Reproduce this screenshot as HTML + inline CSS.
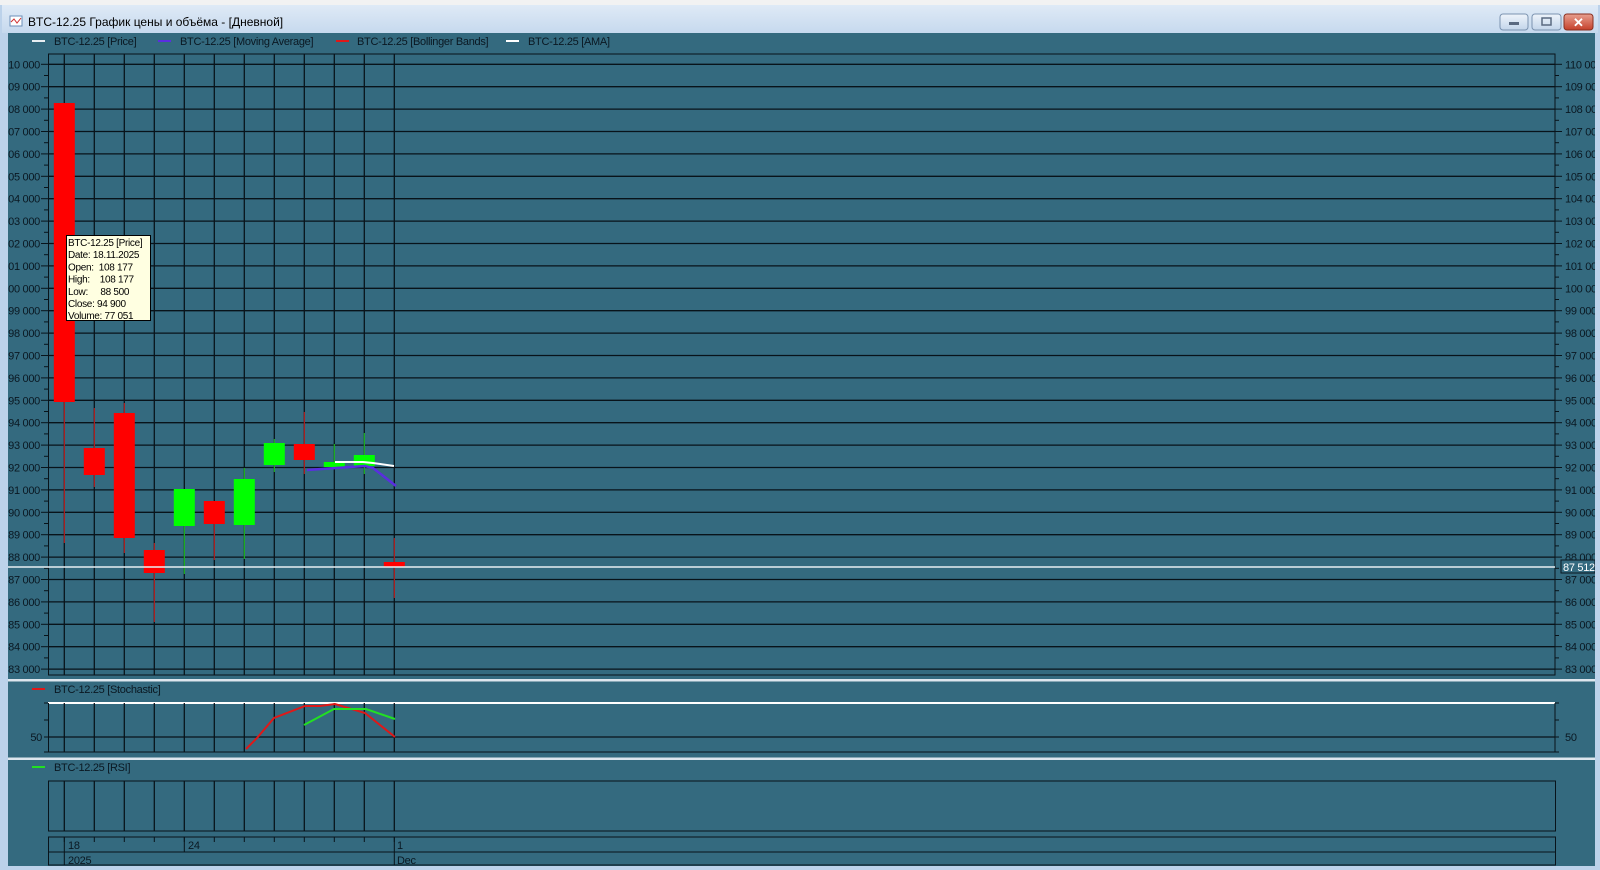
<!DOCTYPE html>
<html><head><meta charset="utf-8"><style>
html,body{margin:0;padding:0;width:1600px;height:870px;overflow:hidden;background:#bfd4ea;}
svg{display:block;font-family:"Liberation Sans",sans-serif;}
</style></head><body>
<svg id="s" width="1600" height="870" xmlns="http://www.w3.org/2000/svg">
<defs>
<linearGradient id="tb" x1="0" y1="0" x2="0" y2="1"><stop offset="0" stop-color="#dfeaf6"/><stop offset="1" stop-color="#c6d9ee"/></linearGradient>
<linearGradient id="cl" x1="0" y1="0" x2="0" y2="1"><stop offset="0" stop-color="#e8a090"/><stop offset="1" stop-color="#c5402a"/></linearGradient>
<linearGradient id="bt" x1="0" y1="0" x2="0" y2="1"><stop offset="0" stop-color="#eef4fb"/><stop offset="1" stop-color="#c3d5ea"/></linearGradient>
<clipPath id="cc"><rect x="8" y="33" width="1587" height="833"/></clipPath>
</defs>
<rect x="0" y="0" width="1600" height="5" fill="#f2f2f2"/>
<rect x="0" y="5" width="1600" height="865" fill="#bcd2ea"/>
<rect x="2" y="5" width="1596" height="28" fill="url(#tb)"/>
<rect x="10" y="16" width="12" height="10" fill="#fff" stroke="#6b8fb8"/>
<polyline points="11,22 14,19 17,23 21,18" fill="none" stroke="#d03030" stroke-width="1"/>
<text x="28" y="26" font-size="12" fill="#000">BTC-12.25 График цены и объёма - [Дневной]</text>
<rect x="1500" y="14" width="28" height="16" rx="3" fill="url(#bt)" stroke="#7b93b0"/>
<rect x="1509" y="22" width="10" height="3" fill="#5a6a80"/>
<rect x="1532" y="14" width="29" height="16" rx="3" fill="url(#bt)" stroke="#7b93b0"/>
<rect x="1542" y="18" width="9" height="7" fill="none" stroke="#5a6a80" stroke-width="1.5"/>
<rect x="1564" y="14" width="29" height="16" rx="3" fill="url(#cl)" stroke="#8a3020"/>
<text x="1578.5" y="27" font-size="13" font-weight="bold" fill="#fff" text-anchor="middle">✕</text>
<g clip-path="url(#cc)">
<rect x="8" y="33" width="1587" height="833" fill="#346a7f"/>
<g id="g"></g>
</g>
</svg>
<script>
var g=document.getElementById('g'),h='';
function L(x1,y1,x2,y2,c,w){h+='<line x1="'+x1+'" y1="'+y1+'" x2="'+x2+'" y2="'+y2+'" stroke="'+c+'" stroke-width="'+(w||1)+'"/>';}
function R(x,y,w,hh,c,s){h+='<rect x="'+x+'" y="'+y+'" width="'+w+'" height="'+hh+'" fill="'+c+'"'+(s?' stroke="'+s+'"':'')+'/>';}
function T(x,y,t,o){h+='<text x="'+x+'" y="'+y+'" font-size="'+((o&&o.fs)||11)+'" fill="'+((o&&o.c)||'#0a1822')+'"'+(o&&o.a?' text-anchor="'+o.a+'"':'')+' letter-spacing="-0.3">'+t+'</text>';}
var K='#08131a';
var lg=[[32,'#e8eef2','BTC-12.25 [Price]',54],[158,'#5a2ee0','BTC-12.25 [Moving Average]',180],[336,'#e01818','BTC-12.25 [Bollinger Bands]',357],[506,'#ffffff','BTC-12.25 [AMA]',528]];
lg.forEach(function(a){L(a[0],41,a[0]+13,41,a[1],2);T(a[3],45,a[2]);});
var xs=[];for(var i=0;i<12;i++)xs.push(64.3+i*30);
function py(p){return 64.3+(110000-p)*0.0224;}
for(var p=110000;p>=83000;p-=1000){var y=py(p);L(48,y,1555,y,K,1.3);
 var s=String(p%100000).padStart(5,'0');T(40,y+4,s.slice(0,2)+' '+s.slice(2),{a:'end'});L(41,y,48,y,K);L(1555,y,1562,y,K);
 var s2=String(p);T(1565,y+4,s2.slice(0,s2.length-3)+' '+s2.slice(-3));
 if(p>83000){var y2=py(p-500);L(44,y2,48,y2,K);L(1555,y2,1559,y2,K);}}
xs.forEach(function(x){L(x,54,x,675,K,1.3);});
R(48.5,54,1506.5,621,'none',K);
var RD='#ff0000',GR='#00ff00';
var c=[[0,103,402,103,543,RD],[1,448,475,408,487,RD],[2,413,538,403,553,RD],[3,550,573,543,622,RD],[4,489,526,489,574,GR],[5,501,524,501,560,RD],[6,479,525,468,559,GR],[7,443,465,439,472,GR],[8,444,460,412,474,RD],[9,462,467,444,468,GR],[10,455,466,433,474,GR],[11,562,567,538,598,RD]];
c.forEach(function(a){var x=xs[a[0]];var wc=a[5]==RD?'#d02020':'#20d020';L(x,a[3],x,a[4],wc,1);R(x-10.5,a[1],21,a[2]-a[1],a[5]);});
h+='<polyline points="307,470 365,466 373,468 396,486" fill="none" stroke="#5a2ee0" stroke-width="2.5"/>';
h+='<polyline points="335,462 363,462 373,463 394,466" fill="none" stroke="#ffffff" stroke-width="2"/>';
L(8,567,1555,567,'#e8f0f4',1.5);
R(1561,560,34,13,'#346a7f','#0a1822');T(1563,571,'87 512',{c:'#ffffff'});
R(66.5,235.5,84,85,'#ffffe1','#000');
['BTC-12.25 [Price]','Date: 18.11.2025','Open:  108 177','High:    108 177','Low:     88 500','Close: 94 900','Volume: 77 051'].forEach(function(t,i){h+='<text x="68" y="'+(246+i*12.2)+'" font-size="10" letter-spacing="-0.3" fill="#000" xml:space="preserve">'+t+'</text>';});
R(8,679,1587,2.5,'#dde6ee');R(8,757.5,1587,2.5,'#dde6ee');
L(32,689,45,689,'#e01818',2);T(54,693,'BTC-12.25 [Stochastic]');
L(48,703,1555,703,'#ffffff',2);L(48,737,1555,737,K,1.3);
xs.forEach(function(x){L(x,703,x,752,K,1.3);});
L(48.5,703,48.5,752,K);L(1555,703,1555,752,K);L(48,752,1555,752,K);
[703,720,737,752].forEach(function(y){L(44,y,48,y,K);L(1555,y,1559,y,K);});
T(42,741,'50',{a:'end'});T(1565,741,'50');
h+='<polyline points="246,749 257,738 274,718 305,706 320,706 335,704 365,713 395,737" fill="none" stroke="#e01818" stroke-width="2"/>';
h+='<polyline points="304,725 334,709 366,709 395,719" fill="none" stroke="#22e022" stroke-width="2"/>';
L(32,767,45,767,'#22e022',2);T(54,771,'BTC-12.25 [RSI]');
R(48.5,781,1507,50,'none',K);
xs.forEach(function(x){L(x,781,x,831,K,1.3);});
R(48.5,837,1507,28,'none',K);L(48,852,1555,852,K);
L(64.3,837,64.3,865,K);L(394.3,837,394.3,865,K);L(184.3,837,184.3,852,K);
xs.forEach(function(x){L(x,837,x,842,K);});
T(68,849,'18');T(188,849,'24');T(397,849,'1');T(68,864,'2025');T(397,864,'Dec');
g.innerHTML=h;
</script>
</body></html>
